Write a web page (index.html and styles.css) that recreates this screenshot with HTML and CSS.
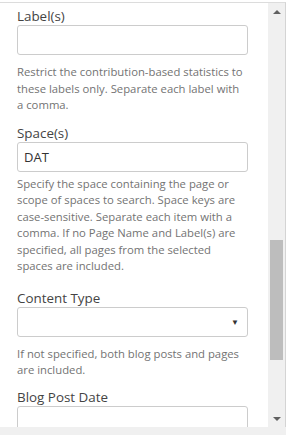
FILE: index.html
```html
<!DOCTYPE html>
<html lang="en">
<head>
    <meta charset="UTF-8">
    <title>Macro parameters</title>
    <link rel="stylesheet" href="styles.css">
</head>
<body>
    <div class="dialog">
        <div class="pane">
            <form class="form">
                <div class="field labels">
                    <label class="field-label">Label(s)</label>
                    <input type="text" class="text-input">
                    <p class="help">Restrict the contribution-based statistics to<br>these labels only. Separate each label with<br>a comma.</p>
                </div>

                <div class="field spaces">
                    <label class="field-label">Space(s)</label>
                    <input type="text" class="text-input" value="DAT">
                    <p class="help tight">Specify the space containing the page or<br>scope of spaces to search. Space keys are<br>case-sensitive. Separate each item with a<br>comma. If no Page Name and Label(s) are<br>specified, all pages from the selected<br>spaces are included.</p>
                </div>

                <div class="field content-type">
                    <label class="field-label">Content Type</label>
                    <div class="select">
                        <span class="select-arrow">&#9660;</span>
                    </div>
                    <p class="help">If not specified, both blog posts and pages<br>are included.</p>
                </div>

                <div class="field">
                    <label class="field-label">Blog Post Date</label>
                    <input type="text" class="text-input">
                </div>
            </form>

            <div class="scrollbar">
                <div class="scroll-btn"><span class="tri up"></span></div>
                <div class="track">
                    <div class="thumb"></div>
                </div>
                <div class="scroll-btn"><span class="tri down"></span></div>
            </div>
        </div>
        <div class="footer"></div>
    </div>
</body>
</html>
```

FILE: styles.css
```css
body {
    margin: 0;
    padding: 0;
    background-color: #fff;
    font-family: 'Open Sans', 'Noto Sans', sans-serif;
    color: #333;
}

.dialog {
    width: 286px;
    height: 435px;
    padding-top: 2px;
    box-sizing: border-box;
    display: flex;
    flex-direction: column;
}

.pane {
    display: flex;
    height: 424px;
    border-top: 1px solid #dcdcdc;
    border-right: 1px solid #d4d4d4;
    overflow: hidden;
}

.form {
    flex: 1;
    min-width: 0;
    padding: 4px 20px 0 17px;
    margin: 0;
}

.field {
    margin-bottom: 12px;
}

.field.labels {
    margin-bottom: 10px;
}

.field.spaces {
    margin-bottom: 14px;
}

.field.content-type {
    margin-bottom: 9px;
}

.field-label {
    display: block;
    font-size: 13.4px;
    line-height: 18px;
    color: #444;
}

.text-input,
.select {
    display: block;
    width: 100%;
    height: 30px;
    box-sizing: border-box;
    border: 1px solid #ccc;
    border-radius: 3px;
    background: #fff;
    padding: 0 6px;
    font-family: 'Open Sans', 'Noto Sans', sans-serif;
    font-size: 13px;
    color: #333;
    outline: none;
}

.select {
    display: flex;
    align-items: center;
    justify-content: flex-end;
}

.select-arrow {
    font-size: 8px;
    color: #333;
    margin-right: 2px;
}

.help {
    margin: 9px 0 0;
    font-size: 11.3px;
    line-height: 16.5px;
    color: #737373;
    white-space: nowrap;
}

.help.tight {
    margin-top: 4px;
}

.scrollbar {
    width: 17px;
    background-color: #f0f0f0;
    display: flex;
    flex-direction: column;
}

.scroll-btn {
    height: 17px;
    display: flex;
    align-items: center;
    justify-content: center;
}

.tri {
    width: 0;
    height: 0;
    border-left: 4px solid transparent;
    border-right: 4px solid transparent;
}

.tri.up {
    border-bottom: 4px solid #606060;
}

.tri.down {
    border-top: 4px solid #606060;
}

.track {
    flex: 1;
    padding: 0 2px;
}

.thumb {
    margin-top: 220px;
    height: 120px;
    background-color: #bdbdbd;
}

.footer {
    flex: 1;
    background-color: #f0f0f0;
}
```
